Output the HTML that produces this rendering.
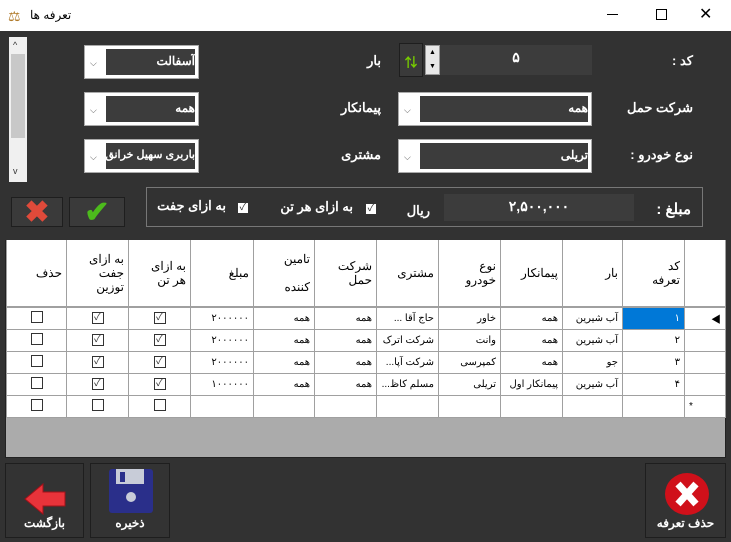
<!DOCTYPE html>
<html><head><meta charset="utf-8"><style>
*{box-sizing:border-box;margin:0;padding:0}
body{width:731px;height:542px;background:#323232;font-family:"Liberation Sans","Noto Sans CJK SC",sans-serif;position:relative;overflow:hidden;color:#fff}
.a{position:absolute}
.lbl{position:absolute;font-size:13px;font-weight:bold;color:#fff;direction:rtl;white-space:nowrap}
.cb{position:absolute;background:#fff;border:1px solid #aaa}
.cb .in{position:absolute;left:21px;right:3px;top:3px;bottom:3px;background:#3c3c3c;color:#fff;font-size:12px;font-weight:bold;text-align:right;padding-top:5px;direction:rtl;white-space:nowrap;overflow:hidden}
.cb .ar{position:absolute;left:5px;top:12px;font-size:9px;color:#555}
table{border-collapse:collapse;position:absolute;left:6px;top:240px;width:719px;direction:rtl;background:#fff;table-layout:fixed}
td{border:1px solid #a0a0a0;height:22px;font-size:10px;color:#000;text-align:right;padding:0 4px;white-space:nowrap;overflow:hidden}
tr.h td{height:67px;font-size:12px;border-top:none;border-bottom:2px solid #a0a0a0}
.ck{display:inline-block;width:12px;height:12px;border:1px solid #333;background:#fff;font-size:10px;line-height:10px;text-align:center;color:#333}
td.c{text-align:center}
.btn{position:absolute;border:1px solid #1e1e1e;background:#333}
.bt{position:absolute;bottom:7px;width:100%;text-align:center;font-size:12px;font-weight:bold}
</style></head><body>
<div class="a" style="left:0;top:0;width:731px;height:31px;background:#fff"></div>
<div class="a" style="left:8px;top:8px;font-size:14px;color:#b07a2a">⚖</div>
<div class="a" style="left:30px;top:8px;font-size:12px;color:#000">تعرفه ها</div>
<div class="a" style="left:607px;top:14px;width:11px;height:1px;background:#000"></div>
<div class="a" style="left:656px;top:9px;width:11px;height:11px;border:1px solid #000"></div>
<div class="a" style="left:699px;top:4px;font-size:16px;color:#000">✕</div>

<div class="a" style="left:9px;top:37px;width:18px;height:145px;background:#f0f0f0"></div>
<div class="a" style="left:11px;top:54px;width:14px;height:84px;background:#c8c8c8"></div>
<div class="a" style="left:13px;top:40px;font-size:9px;color:#333">^</div>
<div class="a" style="left:13px;top:166px;font-size:9px;color:#333">v</div>

<div class="cb" style="left:84px;top:45px;width:115px;height:34px"><div class="in">آسفالت</div><div class="ar">⌵</div></div>
<div class="cb" style="left:84px;top:92px;width:115px;height:34px"><div class="in">همه</div><div class="ar">⌵</div></div>
<div class="cb" style="left:84px;top:139px;width:115px;height:34px"><div class="in" style="font-size:11px">باربری سهیل خرانق</div><div class="ar">⌵</div></div>
<div class="cb" style="left:398px;top:92px;width:194px;height:34px"><div class="in">همه</div><div class="ar">⌵</div></div>
<div class="cb" style="left:398px;top:139px;width:194px;height:34px"><div class="in">تریلی</div><div class="ar">⌵</div></div>

<div class="a" style="left:399px;top:43px;width:24px;height:34px;border:1px solid #1e1e1e;background:#3a3a3a;color:#7c0;font-size:13px;text-align:center;padding-top:8px;font-weight:bold">⇅</div>
<div class="a" style="left:425px;top:45px;width:15px;height:30px;background:#e8e8e8;border:1px solid #999;font-size:7px;color:#000;text-align:center;line-height:14px">▲<br>▼</div>
<div class="a" style="left:440px;top:45px;width:152px;height:30px;background:#3c3c3c;text-align:center;font-size:14px;font-weight:bold;padding-top:4px">۵</div>

<div class="lbl" style="right:38px;top:53px">کد :</div>
<div class="lbl" style="right:350px;top:53px">بار</div>
<div class="lbl" style="right:38px;top:100px">شرکت حمل</div>
<div class="lbl" style="right:350px;top:100px">پیمانکار</div>
<div class="lbl" style="right:38px;top:147px">نوع خودرو :</div>
<div class="lbl" style="right:350px;top:147px">مشتری</div>

<div class="a" style="left:146px;top:187px;width:557px;height:40px;border:1px solid #777"></div>
<div class="lbl" style="right:40px;top:200px;font-size:15px">مبلغ :</div>
<div class="a" style="left:444px;top:194px;width:190px;height:27px;background:#3c3c3c;text-align:center;font-size:14px;font-weight:bold;padding-top:4px">۲,۵۰۰,۰۰۰</div>
<div class="lbl" style="right:301px;top:203px">ریال</div>
<div class="a ck" style="left:365px;top:203px">✓</div>
<div class="lbl" style="right:378px;top:199px">به ازای هر تن</div>
<div class="a ck" style="left:237px;top:202px">✓</div>
<div class="lbl" style="right:505px;top:198px">به ازای جفت</div>

<div class="a" style="left:11px;top:197px;width:52px;height:30px;border:1px solid #1e1e1e;background:#3a3a3a;color:#e04a3a;font-size:30px;text-align:center;line-height:29px;font-weight:bold">✖</div>
<div class="a" style="left:69px;top:197px;width:56px;height:30px;border:1px solid #1e1e1e;background:#3a3a3a;color:#4cbb1c;font-size:30px;text-align:center;line-height:30px;font-weight:bold">✔</div>

<div class="a" style="left:5px;top:240px;width:721px;height:218px;background:#ababab;border:1px solid #222"></div>
<table>
<colgroup><col style="width:41px"><col style="width:62px"><col style="width:60px"><col style="width:62px"><col style="width:62px"><col style="width:62px"><col style="width:62px"><col style="width:61px"><col style="width:63px"><col style="width:62px"><col style="width:62px"><col style="width:60px"></colgroup>
<tr class="h"><td></td><td>کد<br>تعرفه</td><td>بار</td><td>پیمانکار</td><td>نوع<br>خودرو</td><td>مشتری</td><td>شرکت<br>حمل</td><td>تامین<br><br>کننده</td><td>مبلغ</td><td>به ازای<br>هر تن</td><td>به ازای<br>جفت<br>توزین</td><td>حذف</td></tr>
<tr><td style="color:#000">◀</td><td style="background:#0078d7;color:#fff">۱</td><td>آب شیرین</td><td>همه</td><td>خاور</td><td>حاج آقا ...</td><td>همه</td><td>همه</td><td>۲۰۰۰۰۰۰</td><td class="c"><span class="ck">✓</span></td><td class="c"><span class="ck">✓</span></td><td class="c"><span class="ck"></span></td></tr>
<tr><td></td><td>۲</td><td>آب شیرین</td><td>همه</td><td>وانت</td><td>شرکت اترک</td><td>همه</td><td>همه</td><td>۲۰۰۰۰۰۰</td><td class="c"><span class="ck">✓</span></td><td class="c"><span class="ck">✓</span></td><td class="c"><span class="ck"></span></td></tr>
<tr><td></td><td>۳</td><td>جو</td><td>همه</td><td>کمپرسی</td><td>شرکت آپا...</td><td>همه</td><td>همه</td><td>۲۰۰۰۰۰۰</td><td class="c"><span class="ck">✓</span></td><td class="c"><span class="ck">✓</span></td><td class="c"><span class="ck"></span></td></tr>
<tr><td></td><td>۴</td><td>آب شیرین</td><td>پیمانکار اول</td><td>تریلی</td><td>مسلم کاظ...</td><td>همه</td><td>همه</td><td>۱۰۰۰۰۰۰</td><td class="c"><span class="ck">✓</span></td><td class="c"><span class="ck">✓</span></td><td class="c"><span class="ck"></span></td></tr>
<tr><td style="text-align:left">*</td><td></td><td></td><td></td><td></td><td></td><td></td><td></td><td></td><td class="c"><span class="ck"></span></td><td class="c"><span class="ck"></span></td><td class="c"><span class="ck"></span></td></tr>
</table>

<div class="btn" style="left:5px;top:463px;width:79px;height:75px">
<svg class="a" style="left:17px;top:18px" width="44" height="34" viewBox="0 0 44 34"><path d="M2 17 L20 2 L20 10 L42 10 L42 24 L20 24 L20 32 Z" fill="#e8333a" stroke="#a01018"/></svg>
<div class="bt">بازگشت</div></div>
<div class="btn" style="left:90px;top:463px;width:80px;height:75px">
<svg class="a" style="left:17px;top:4px" width="46" height="46" viewBox="0 0 46 46"><rect x="1" y="1" width="44" height="44" rx="3" fill="#2a2f8a"/><rect x="8" y="1" width="28" height="15" fill="#c8ccd8"/><rect x="12" y="4" width="5" height="10" fill="#2a2f8a"/><circle cx="23" cy="29" r="5" fill="#c8ccd8"/></svg>
<div class="bt">ذخیره</div></div>
<div class="btn" style="left:645px;top:463px;width:81px;height:75px">
<svg class="a" style="left:18px;top:8px" width="46" height="44" viewBox="0 0 46 44"><ellipse cx="23" cy="22" rx="22" ry="21" fill="#d0101a"/><path d="M14 12 L32 32 M32 12 L14 32" stroke="#fff" stroke-width="7"/></svg>
<div class="bt">حذف تعرفه</div></div>
</body></html>
